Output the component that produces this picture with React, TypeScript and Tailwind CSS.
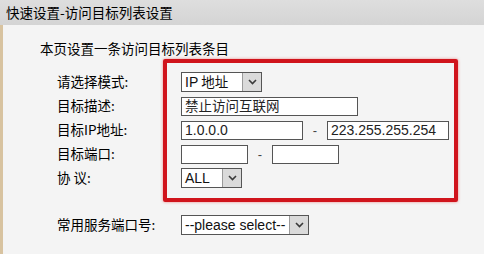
import React from "react";

const CJK = "font-['Noto_Sans_CJK_SC',sans-serif]";
const LAT = "font-['Liberation_Sans','Noto_Sans_CJK_SC',sans-serif]";

function Chevron() {
  return (
    <svg width="9" height="6" viewBox="0 0 9 6" className="block">
      <polyline points="1,1 4.5,4.5 8,1" fill="none" stroke="#3a3a3a" strokeWidth="1.6" />
    </svg>
  );
}

function Select({ width, children }: { width: string; children: React.ReactNode }) {
  return (
    <div className={`flex h-[20px] ${width} border border-[#555] bg-white`}>
      <div className={`flex flex-1 items-center whitespace-nowrap pl-[3px] text-[14px] leading-none text-[#111] ${LAT}`}>
        {children}
      </div>
      <div className="flex w-[19px] shrink-0 items-center justify-center border-l border-[#9a9a9a] bg-[#dadada]">
        <Chevron />
      </div>
    </div>
  );
}

function Input({ width, children }: { width: string; children?: React.ReactNode }) {
  return (
    <div
      className={`flex h-[19px] ${width} items-center whitespace-nowrap border border-[#555] bg-white pl-[3px] text-[14px] leading-none text-[#222] ${LAT}`}
    >
      {children}
    </div>
  );
}

function Dash() {
  return <div className={`w-[24px] text-center text-[13px] leading-none text-[#444] ${LAT}`}>-</div>;
}

const ROWS: { label: string; control: React.ReactNode }[] = [
  {
    label: "请选择模式:",
    control: (
      <Select width="w-[81px]">
        IP <span className={`ml-[3px] text-[13.5px] ${CJK}`}>地址</span>
      </Select>
    ),
  },
  {
    label: "目标描述:",
    control: (
      <Input width="w-[177px]">
        <span className={`text-[13.5px] ${CJK}`}>禁止访问互联网</span>
      </Input>
    ),
  },
  {
    label: "目标IP地址:",
    control: (
      <div className="flex items-center">
        <Input width="w-[122px]">1.0.0.0</Input>
        <Dash />
        <Input width="w-[122px]">223.255.255.254</Input>
      </div>
    ),
  },
  {
    label: "目标端口:",
    control: (
      <div className="flex items-center">
        <Input width="w-[67px]" />
        <Dash />
        <Input width="w-[67px]" />
      </div>
    ),
  },
  {
    label: "协 议:",
    control: <Select width="w-[61px]">ALL</Select>,
  },
];

export default function App() {
  return (
    <div className="relative h-[254px] w-[484px] overflow-hidden bg-[#f4f4f4] text-black">
      <div className={`flex h-[25px] items-center bg-gradient-to-b from-[#dedede] to-[#d4d4d4] pl-[6px] text-[13.5px] ${CJK}`}>
        快速设置-访问目标列表设置
      </div>
      <div className="h-[229px] border-l-[3px] border-[#d8c3a0]">
        <div className={`pl-[37px] pt-[14px] text-[13.5px] leading-[18px] ${CJK}`}>本页设置一条访问目标列表条目</div>

        <div className="mt-[15px] flex flex-col gap-[4px]">
          {ROWS.map(r => (
            <div key={r.label} className="flex h-[20px] items-center">
              <div className={`w-[178px] pl-[54px] text-[13.5px] leading-none ${CJK}`}>{r.label}</div>
              {r.control}
            </div>
          ))}
        </div>

        <div className="mt-[27px] flex h-[20px] items-center">
          <div className={`w-[178px] pl-[54px] text-[13.5px] leading-none ${CJK}`}>常用服务端口号:</div>
          <Select width="w-[128px]">--please select--</Select>
        </div>
      </div>

      {/* red annotation frame */}
      <div className="pointer-events-none absolute left-[163px] top-[59px] h-[143px] w-[295px] rounded-[2px] border-[4px] border-[#d0141c] shadow-[0_0_3px_rgba(230,40,40,0.55)]" />
    </div>
  );
}
